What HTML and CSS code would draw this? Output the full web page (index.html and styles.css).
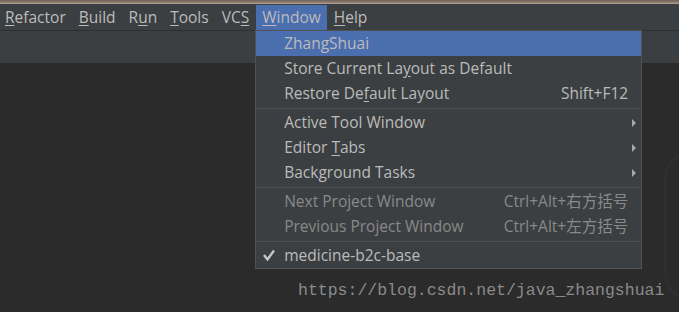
FILE: index.html
```html
<!DOCTYPE html>
<html lang="en">
<head>
  <meta charset="UTF-8" />
  <title>Window menu</title>
  <link rel="stylesheet" href="styles.css">
</head>
<body>

<div class="frame-top"></div>

<div class="menu-bar">
  <div class="menu-item"><u>R</u>efactor</div>
  <div class="menu-item"><u>B</u>uild</div>
  <div class="menu-item">R<u>u</u>n</div>
  <div class="menu-item"><u>T</u>ools</div>
  <div class="menu-item">VC<u>S</u></div>
  <div class="menu-item active"><u>W</u>indow
    <!-- rozwinięte menu -->
    <div class="dropdown">
      <div class="row selected"><span class="label">ZhangShuai</span></div>
      <div class="row"><span class="label">Store Current La<u>y</u>out as Default</span></div>
      <div class="row"><span class="label">Restore De<u>f</u>ault Layout</span><span class="shortcut">Shift+F12</span></div>
      <div class="sep"></div>
      <div class="row"><span class="label">Active Tool Window</span><span class="arrow"></span></div>
      <div class="row"><span class="label">Editor <u>T</u>abs</span><span class="arrow"></span></div>
      <div class="row"><span class="label">Background Tasks</span><span class="arrow"></span></div>
      <div class="sep"></div>
      <div class="row disabled"><span class="label">Next Project Window</span><span class="shortcut">Ctrl+Alt+右方括号</span></div>
      <div class="row disabled"><span class="label">Previous Project Window</span><span class="shortcut">Ctrl+Alt+左方括号</span></div>
      <div class="sep"></div>
      <div class="row">
        <svg class="check" width="12" height="12" viewBox="0 0 12 12">
          <path d="M1 6 L4.5 10.5 L11 1.5" fill="none" stroke="#c4c4c4" stroke-width="2.4"/>
        </svg>
        <span class="label">medicine-b2c-base</span>
      </div>
    </div>
  </div>
  <div class="menu-item"><u>H</u>elp</div>
</div>

<div class="toolbar"></div>

<div class="editor">
  <div class="ghost"></div>
  <div class="watermark">https://blog.csdn.net/java_zhangshuai</div>
</div>

</body>
</html>
```

FILE: styles.css
```css
body {
  margin: 0;
  width: 679px;
  height: 312px;
  overflow: hidden;
  display: flex;
  flex-direction: column;
  background: #2b2b2b;
  font-family: 'Open Sans', 'Noto Sans CJK SC', sans-serif;
  font-size: 15.5px;
  color: #bbbbbb;
}

u {
  text-decoration: underline;
  text-underline-offset: 2px;
}

.frame-top {
  height: 4px;
  background: linear-gradient(#6e6259, #8d7e70 60%, #b8aa9c);
}

.menu-bar {
  height: 26px;
  background: #3c3f41;
  border-bottom: 1px solid #2d2f30;
  display: flex;
  margin-left: -1px;
}

.menu-item {
  position: relative;
  padding: 0 6px;
  margin-top: 1px;
  height: 25px;
  line-height: 25px;
  margin-right: 1px;
}

.menu-item.active {
  background: #4b6eaf;
}

.dropdown {
  position: absolute;
  left: -1px;
  top: 25px;
  width: 385px;
  line-height: normal;
  background: #3c3f41;
  border: 1px solid #515151;
  z-index: 2;
}

.row {
  height: 25px;
  box-sizing: border-box;
  padding: 0 13px 2px 28px;
  display: flex;
  align-items: center;
  position: relative;
  white-space: nowrap;
}

.row.selected {
  background: #4b6eaf;
}

.row.disabled {
  color: #898989;
}

.label {
  flex: 1;
}

.shortcut {
  margin-left: 20px;
}

.arrow {
  width: 0;
  height: 0;
  margin-top: 2px;
  border-top: 4px solid transparent;
  border-bottom: 4px solid transparent;
  border-left: 4px solid #a8a8a8;
  margin-right: -8px;
}

.check {
  position: absolute;
  left: 7px;
  top: 6px;
}

.sep {
  height: 4px;
  display: flex;
  align-items: center;
}

.sep::before {
  content: '';
  flex: 1;
  height: 1px;
  background: #515151;
}

.toolbar {
  height: 32px;
  background: #3c3f41;
}

.editor {
  flex: 1;
  position: relative;
  overflow: hidden;
  background: #2b2b2b;
}

.ghost {
  position: absolute;
  left: 664px;
  top: 90px;
  width: 60px;
  height: 140px;
  border-radius: 24px;
  border: 3px solid #2f2f2f;
}

.watermark {
  position: absolute;
  left: 298px;
  top: 218px;
  font-family: 'Liberation Mono', monospace;
  font-size: 16.5px;
  color: #8a8a8a;
}
```
